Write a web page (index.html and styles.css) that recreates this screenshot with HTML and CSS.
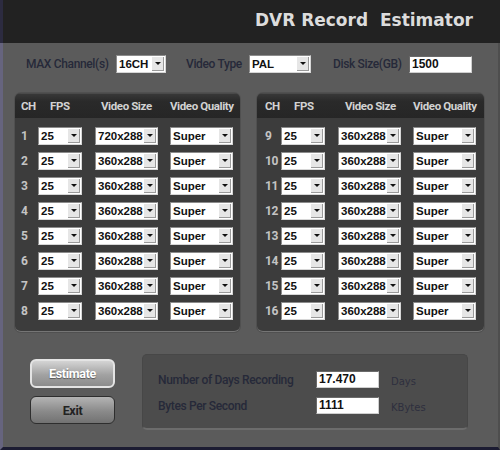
FILE: index.html
```html
<!DOCTYPE html>
<html>
<head>
<meta charset="utf-8">
<title>DVR Record Estimator</title>
<link rel="stylesheet" href="styles.css">
</head>
<body>
<div class="app">
  <header class="titlebar">
    <h1 class="title">DVR Record&nbsp; Estimator</h1>
  </header>
  <main class="main">
    <div class="controls">
      <span class="label l-max">MAX Channel(s)</span>
      <div class="combo w-ch"><span class="val">16CH</span><span class="btn"></span></div>
      <span class="label l-type">Video Type</span>
      <div class="combo w-pal"><span class="val">PAL</span><span class="btn"></span></div>
      <span class="label l-disk">Disk Size(GB)</span>
      <div class="field w-disk">1500</div>
    </div>

    <div class="panels">
      <section class="panel panel-left">
        <div class="phead grid">
          <span class="h">CH</span><span class="h h-fps">FPS</span><span class="h h-size">Video Size</span><span class="h">Video Quality</span>
        </div>
        <div class="rows">
          <div class="grid row"><span class="num">1</span><div class="combo w-fps"><span class="val">25</span><span class="btn"></span></div><div class="combo w-size"><span class="val">720x288</span><span class="btn"></span></div><div class="combo w-q"><span class="val">Super</span><span class="btn"></span></div></div>
          <div class="grid row"><span class="num">2</span><div class="combo w-fps"><span class="val">25</span><span class="btn"></span></div><div class="combo w-size"><span class="val">360x288</span><span class="btn"></span></div><div class="combo w-q"><span class="val">Super</span><span class="btn"></span></div></div>
          <div class="grid row"><span class="num">3</span><div class="combo w-fps"><span class="val">25</span><span class="btn"></span></div><div class="combo w-size"><span class="val">360x288</span><span class="btn"></span></div><div class="combo w-q"><span class="val">Super</span><span class="btn"></span></div></div>
          <div class="grid row"><span class="num">4</span><div class="combo w-fps"><span class="val">25</span><span class="btn"></span></div><div class="combo w-size"><span class="val">360x288</span><span class="btn"></span></div><div class="combo w-q"><span class="val">Super</span><span class="btn"></span></div></div>
          <div class="grid row"><span class="num">5</span><div class="combo w-fps"><span class="val">25</span><span class="btn"></span></div><div class="combo w-size"><span class="val">360x288</span><span class="btn"></span></div><div class="combo w-q"><span class="val">Super</span><span class="btn"></span></div></div>
          <div class="grid row"><span class="num">6</span><div class="combo w-fps"><span class="val">25</span><span class="btn"></span></div><div class="combo w-size"><span class="val">360x288</span><span class="btn"></span></div><div class="combo w-q"><span class="val">Super</span><span class="btn"></span></div></div>
          <div class="grid row"><span class="num">7</span><div class="combo w-fps"><span class="val">25</span><span class="btn"></span></div><div class="combo w-size"><span class="val">360x288</span><span class="btn"></span></div><div class="combo w-q"><span class="val">Super</span><span class="btn"></span></div></div>
          <div class="grid row"><span class="num">8</span><div class="combo w-fps"><span class="val">25</span><span class="btn"></span></div><div class="combo w-size"><span class="val">360x288</span><span class="btn"></span></div><div class="combo w-q"><span class="val">Super</span><span class="btn"></span></div></div>
        </div>
      </section>

      <section class="panel panel-right">
        <div class="phead grid">
          <span class="h">CH</span><span class="h h-fps">FPS</span><span class="h h-size">Video Size</span><span class="h">Video Quality</span>
        </div>
        <div class="rows">
          <div class="grid row"><span class="num">9</span><div class="combo w-fps"><span class="val">25</span><span class="btn"></span></div><div class="combo w-size"><span class="val">360x288</span><span class="btn"></span></div><div class="combo w-q"><span class="val">Super</span><span class="btn"></span></div></div>
          <div class="grid row"><span class="num">10</span><div class="combo w-fps"><span class="val">25</span><span class="btn"></span></div><div class="combo w-size"><span class="val">360x288</span><span class="btn"></span></div><div class="combo w-q"><span class="val">Super</span><span class="btn"></span></div></div>
          <div class="grid row"><span class="num">11</span><div class="combo w-fps"><span class="val">25</span><span class="btn"></span></div><div class="combo w-size"><span class="val">360x288</span><span class="btn"></span></div><div class="combo w-q"><span class="val">Super</span><span class="btn"></span></div></div>
          <div class="grid row"><span class="num">12</span><div class="combo w-fps"><span class="val">25</span><span class="btn"></span></div><div class="combo w-size"><span class="val">360x288</span><span class="btn"></span></div><div class="combo w-q"><span class="val">Super</span><span class="btn"></span></div></div>
          <div class="grid row"><span class="num">13</span><div class="combo w-fps"><span class="val">25</span><span class="btn"></span></div><div class="combo w-size"><span class="val">360x288</span><span class="btn"></span></div><div class="combo w-q"><span class="val">Super</span><span class="btn"></span></div></div>
          <div class="grid row"><span class="num">14</span><div class="combo w-fps"><span class="val">25</span><span class="btn"></span></div><div class="combo w-size"><span class="val">360x288</span><span class="btn"></span></div><div class="combo w-q"><span class="val">Super</span><span class="btn"></span></div></div>
          <div class="grid row"><span class="num">15</span><div class="combo w-fps"><span class="val">25</span><span class="btn"></span></div><div class="combo w-size"><span class="val">360x288</span><span class="btn"></span></div><div class="combo w-q"><span class="val">Super</span><span class="btn"></span></div></div>
          <div class="grid row"><span class="num">16</span><div class="combo w-fps"><span class="val">25</span><span class="btn"></span></div><div class="combo w-size"><span class="val">360x288</span><span class="btn"></span></div><div class="combo w-q"><span class="val">Super</span><span class="btn"></span></div></div>
        </div>
      </section>
    </div>

    <div class="bottom">
      <div class="buttons">
        <button class="button btn-estimate">Estimate</button>
        <button class="button btn-exit">Exit</button>
      </div>
      <div class="results">
        <span class="rlabel">Number of Days Recording</span>
        <div class="field w-res">17.470</div>
        <span class="unit">Days</span>
        <span class="rlabel">Bytes Per Second</span>
        <div class="field w-res">1111</div>
        <span class="unit">KBytes</span>
      </div>
    </div>
  </main>
</div>
</body>
</html>
```

FILE: styles.css
```css
html, body {
  margin: 0;
  padding: 0;
  background: #5a5a5a;
}

.app {
  width: 500px;
  height: 450px;
  display: flex;
  flex-direction: column;
  font-family: Roboto, "Liberation Sans", sans-serif;
}

.titlebar {
  height: 43px;
  box-sizing: border-box;
  background: #222222;
  border-left: 3px solid #2c2b40;
  display: flex;
  justify-content: flex-end;
  align-items: center;
  padding: 0 27px 3px 0;
}

.title {
  margin: 0;
  font-family: "DejaVu Sans", sans-serif;
  font-weight: bold;
  font-size: 17px;
  color: #dcdcdc;
}

.main {
  flex: 1;
  box-sizing: border-box;
  background: #5b5b5b;
  border-left: 3px solid #66647e;
  border-bottom: 3px solid #1c1c32;
  border-right: 2px solid #4e4e4e;
  padding-top: 12px;
}

/* top controls */
.controls {
  display: flex;
  align-items: center;
  padding-left: 23px;
  height: 18px;
}

.label {
  font-size: 12px;
  font-weight: 500;
  letter-spacing: -0.35px;
  color: #262939;
  white-space: nowrap;
}

.l-max { width: 90px; }
.l-type { width: 63px; margin-left: 20px; }
.l-disk { width: 76px; margin-left: 22px; }

/* combo box */
.combo {
  height: 18px;
  box-sizing: border-box;
  background: #ffffff;
  border: 1px solid #8c8c8c;
  border-right-color: #d6d6d6;
  border-bottom-color: #d6d6d6;
  display: flex;
  align-items: stretch;
  font-family: "Liberation Sans", Arial, sans-serif;
  font-weight: bold;
  font-size: 11.5px;
  color: #111111;
}

.combo .val {
  flex: 1;
  padding-left: 2px;
  line-height: 16px;
  white-space: nowrap;
}

.combo .btn {
  width: 12px;
  flex: none;
  margin: 1px;
  box-sizing: border-box;
  background: #e6e6e6;
  border-right: 1px solid #9a9a9a;
  border-bottom: 1px solid #9a9a9a;
  display: flex;
  align-items: center;
  justify-content: center;
}

.combo .btn::after {
  content: "";
  width: 0;
  height: 0;
  border-left: 3px solid transparent;
  border-right: 3px solid transparent;
  border-top: 3px solid #111111;
}

.w-ch { width: 50px; }
.w-pal { width: 62px; }
.w-fps { width: 44px; }
.w-size { width: 63px; }
.w-q { width: 63px; }

.field {
  height: 17px;
  box-sizing: border-box;
  background: #ffffff;
  border: 1px solid #6a6a6a;
  border-right-color: #cfcfcf;
  border-bottom-color: #cfcfcf;
  font-family: "Liberation Sans", Arial, sans-serif;
  font-weight: bold;
  font-size: 12px;
  line-height: 15px;
  padding-left: 2px;
  color: #111111;
}

.w-disk { width: 63px; }
.w-res { width: 63px; }

/* channel panels */
.panels {
  display: flex;
  gap: 17px;
  margin-top: 20px;
  padding-left: 12px;
}

.panel {
  box-sizing: border-box;
  height: 239px;
  background: #3c3c3c;
  border-radius: 6px;
  border-bottom: 1px solid #757575;
  box-shadow: 0 0 0 1px #505050;
  overflow: hidden;
}

.panel-left { width: 225px; }
.panel-right { width: 227px; }

.grid {
  display: grid;
  align-items: center;
}

.panel-left .grid {
  grid-template-columns: 17px 57px 75px 63px;
  padding-left: 6px;
}

.panel-right .grid {
  grid-template-columns: 16px 57px 75px 63px;
  padding-left: 8px;
}

.phead {
  height: 25px;
  background: linear-gradient(#383838, #2a2a2a 30%, #262626);
  border-top: 1px solid #4a4a4a;
  box-sizing: border-box;
}

.h {
  font-size: 11.5px;
  font-weight: bold;
  letter-spacing: -0.4px;
  color: #d2d2d2;
  white-space: nowrap;
}

.h-fps { padding-left: 12px; }
.h-size { padding-left: 6px; }

.panel-right .h-fps { padding-left: 13px; }
.panel-right .h-size { padding-left: 7px; }

.rows {
  display: flex;
  flex-direction: column;
  gap: 7px;
  padding-top: 9px;
}

.num {
  font-size: 12px;
  font-weight: bold;
  letter-spacing: -0.5px;
  color: #c4c4c4;
}

/* bottom section */
.bottom {
  display: flex;
  align-items: flex-start;
  margin-top: 22px;
  padding-left: 27px;
}

.buttons {
  display: flex;
  flex-direction: column;
  gap: 8px;
  margin-top: 5px;
}

.button {
  width: 85px;
  height: 29px;
  border-radius: 6px;
  font-family: Roboto, "Liberation Sans", sans-serif;
  font-weight: bold;
  font-size: 12.5px;
  letter-spacing: -0.3px;
  padding: 0;
  cursor: pointer;
}

.btn-estimate {
  border: 2px solid #e4e4e4;
  background: linear-gradient(#d4d4d4, #a2a2a2 55%, #8c8c8c);
  color: #ffffff;
  text-shadow: 0 1px 1px #555555;
}

.btn-exit {
  height: 28px;
  border: 1px solid #2e2e2e;
  background: linear-gradient(#b4b4b4, #8a8a8a 55%, #727272);
  color: #222222;
}

.results {
  margin-left: 27px;
  width: 326px;
  height: 76px;
  box-sizing: border-box;
  background: #4c4c4c;
  border: 1px solid #474747;
  border-bottom: 2px solid #6c6c6c;
  border-radius: 5px;
  display: grid;
  grid-template-columns: 146px 63px auto;
  column-gap: 12px;
  row-gap: 9px;
  align-items: center;
  align-content: start;
  padding: 16px 0 0 15px;
}

.rlabel {
  font-size: 12px;
  font-weight: 500;
  letter-spacing: -0.35px;
  color: #262939;
  white-space: nowrap;
}

.unit {
  font-family: "DejaVu Sans", sans-serif;
  font-size: 10px;
  color: #2e2f3e;
  padding-top: 3px;
}
```
